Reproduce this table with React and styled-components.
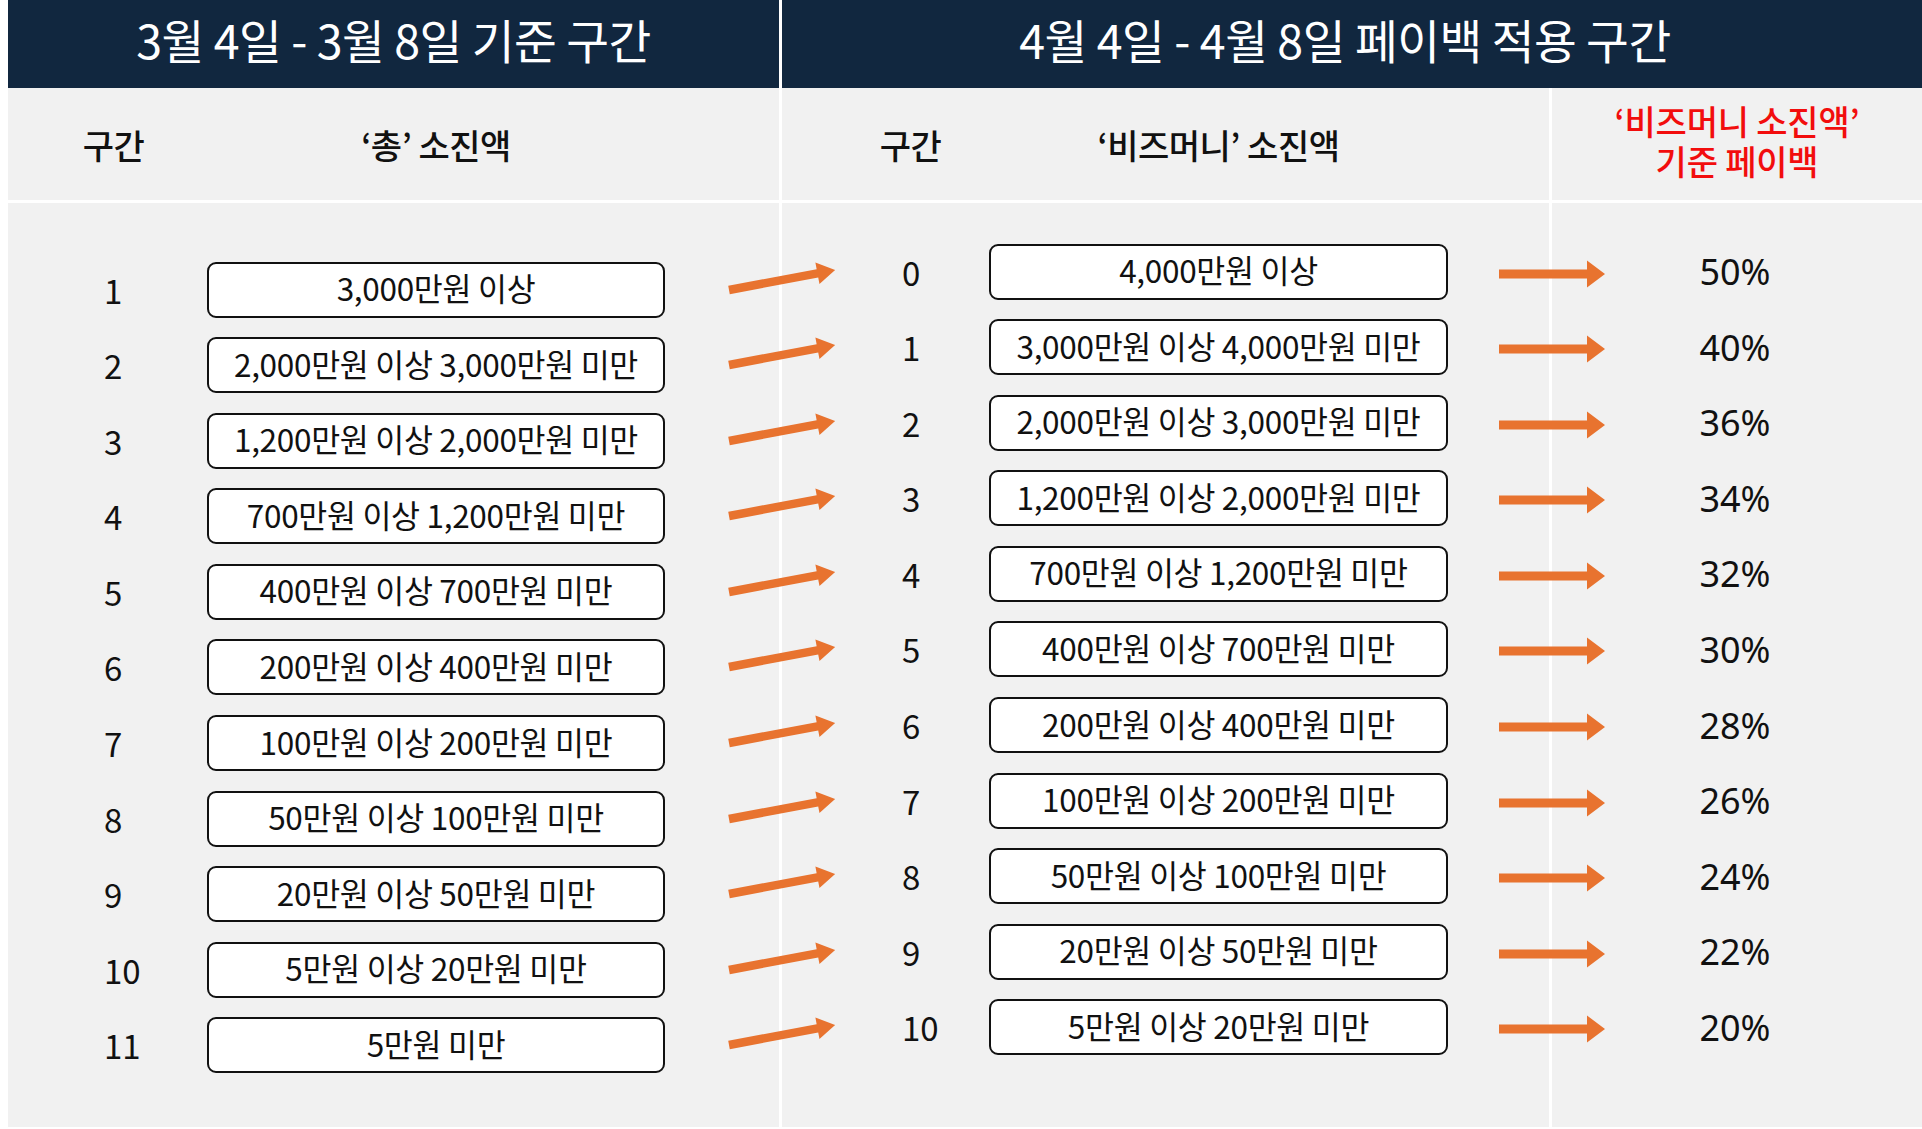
import React from "react";
import styled, { createGlobalStyle } from "styled-components";

const NAVY = "#11273f";
const GRAY = "#f1f1f1";
const ORANGE = "#e8732f";

const GlobalStyle = createGlobalStyle`
  html, body {
    margin: 0;
    padding: 0;
    background: #fff;
    overflow: hidden;
  }
  body {
    padding-left: 8px;
    font-family: "Noto Sans CJK KR", "Noto Sans", sans-serif;
    color: #111;
  }
`;

const Page = styled.div`
  width: 1914px;
`;

const TitleBar = styled.div`
  display: grid;
  grid-template-columns: 771px 1fr;
  column-gap: 3px;
  height: 88px;
  background: #fff;
`;

const TitleCell = styled.div`
  background: ${NAVY};
  color: #fff;
  display: flex;
  align-items: center;
  justify-content: center;
  padding-bottom: 12px;
  padding-right: ${(p) => p.$shift || 0}px;
  font-size: 46.5px;
  font-weight: 400;
  letter-spacing: -0.5px;
  box-sizing: border-box;
`;

const Table = styled.div`
  display: grid;
  grid-template-columns: 771px 767px 1fr;
  grid-template-rows: 112px 924px;
  gap: 3px;
  background: #fff;
`;

const Cell = styled.div`
  background: ${GRAY};
  display: flex;
  flex-direction: column;
  justify-content: ${(p) => (p.$center ? "center" : "flex-start")};
  align-items: ${(p) => (p.$center ? "center" : "stretch")};
`;

const Lane = styled.div`
  display: grid;
  grid-template-columns: ${(p) => p.$numW}px ${(p) => p.$boxW}px auto;
  align-items: center;
  height: ${(p) => (p.$h ? `${p.$h}px` : "100%")};
`;

const Label = styled.div`
  text-align: center;
  font-size: 34px;
  font-weight: 500;
  letter-spacing: -0.5px;
  padding-left: ${(p) => p.$pad || 0}px;
`;

const RedLabel = styled.div`
  color: #f20d0d;
  text-align: center;
  font-size: 34px;
  font-weight: 500;
  line-height: 40px;
  letter-spacing: -0.2px;
  padding-bottom: 6px;
`;

const List = styled.div`
  display: flex;
  flex-direction: column;
  gap: 19.6px;
  padding-top: ${(p) => p.$top}px;
`;

const Num = styled.div`
  text-align: left;
  font-size: 33px;
  padding-left: ${(p) => p.$pad}px;
`;

const Box = styled.div`
  height: 56px;
  box-sizing: border-box;
  border: 2px solid #111;
  border-radius: 9px;
  background: #fff;
  display: flex;
  align-items: center;
  justify-content: center;
  font-size: 31.5px;
  letter-spacing: -0.3px;
  padding-bottom: 5px;
`;

const ArrowSvg = styled.svg`
  position: relative;
  z-index: 2;
  overflow: visible;
  margin-left: ${(p) => p.$gap}px;
  margin-top: ${(p) => p.$dy || 0}px;
  display: block;
`;

const Pct = styled.div`
  height: 56px;
  display: flex;
  align-items: center;
  justify-content: center;
  font-family: "Noto Sans", "Liberation Sans", sans-serif;
  font-size: 36px;
  padding-right: 4px;
`;

const SlantArrow = () => (
  <ArrowSvg $gap={64} width="108" height="56" viewBox="0 0 108 56">
    <g transform="translate(0 28) rotate(-10.7)">
      <polygon
        fill={ORANGE}
        points="0,-4.2 90,-4.2 90,-11 108,0 90,11 90,4.2 0,4.2"
      />
    </g>
  </ArrowSvg>
);

const FlatArrow = () => (
  <ArrowSvg $gap={51} $dy={4} width="106" height="28" viewBox="0 0 106 28">
    <polygon
      fill={ORANGE}
      points="0,9.5 88,9.5 88,0.5 106,14 88,27.5 88,18.5 0,18.5"
    />
  </ArrowSvg>
);

const oldTiers = [
  "3,000만원 이상",
  "2,000만원 이상 3,000만원 미만",
  "1,200만원 이상 2,000만원 미만",
  "700만원 이상 1,200만원 미만",
  "400만원 이상 700만원 미만",
  "200만원 이상 400만원 미만",
  "100만원 이상 200만원 미만",
  "50만원 이상 100만원 미만",
  "20만원 이상 50만원 미만",
  "5만원 이상 20만원 미만",
  "5만원 미만",
];

const newTiers = [
  ["4,000만원 이상", "50%"],
  ["3,000만원 이상 4,000만원 미만", "40%"],
  ["2,000만원 이상 3,000만원 미만", "36%"],
  ["1,200만원 이상 2,000만원 미만", "34%"],
  ["700만원 이상 1,200만원 미만", "32%"],
  ["400만원 이상 700만원 미만", "30%"],
  ["200만원 이상 400만원 미만", "28%"],
  ["100만원 이상 200만원 미만", "26%"],
  ["50만원 이상 100만원 미만", "24%"],
  ["20만원 이상 50만원 미만", "22%"],
  ["5만원 이상 20만원 미만", "20%"],
];

const App = () => {
  return (
    <Page>
      <GlobalStyle />
      <TitleBar>
        <TitleCell>3월 4일 - 3월 8일 기준 구간</TitleCell>
        <TitleCell $shift={14}>4월 4일 - 4월 8일 페이백 적용 구간</TitleCell>
      </TitleBar>
      <Table>
        <Cell>
          <Lane $numW={199} $boxW={458}>
            <Label $pad={12}>구간</Label>
            <Label>‘총’ 소진액</Label>
          </Lane>
        </Cell>
        <Cell>
          <Lane $numW={207} $boxW={459}>
            <Label $pad={50}>구간</Label>
            <Label>‘비즈머니’ 소진액</Label>
          </Lane>
        </Cell>
        <Cell $center>
          <RedLabel>
            ‘비즈머니 소진액’
            <br />
            기준 페이백
          </RedLabel>
        </Cell>

        <Cell>
          <List $top={58.5}>
            {oldTiers.map((tier, index) => (
              <Lane key={index} $numW={199} $boxW={458} $h={56}>
                <Num $pad={96}>{index + 1}</Num>
                <Box>{tier}</Box>
                <SlantArrow />
              </Lane>
            ))}
          </List>
        </Cell>
        <Cell>
          <List $top={40.5}>
            {newTiers.map(([tier], index) => (
              <Lane key={index} $numW={207} $boxW={459} $h={56}>
                <Num $pad={120}>{index}</Num>
                <Box>{tier}</Box>
                <FlatArrow />
              </Lane>
            ))}
          </List>
        </Cell>
        <Cell>
          <List $top={40.5}>
            {newTiers.map(([, pct], index) => (
              <Pct key={index}>{pct}</Pct>
            ))}
          </List>
        </Cell>
      </Table>
    </Page>
  );
};

export default App;
